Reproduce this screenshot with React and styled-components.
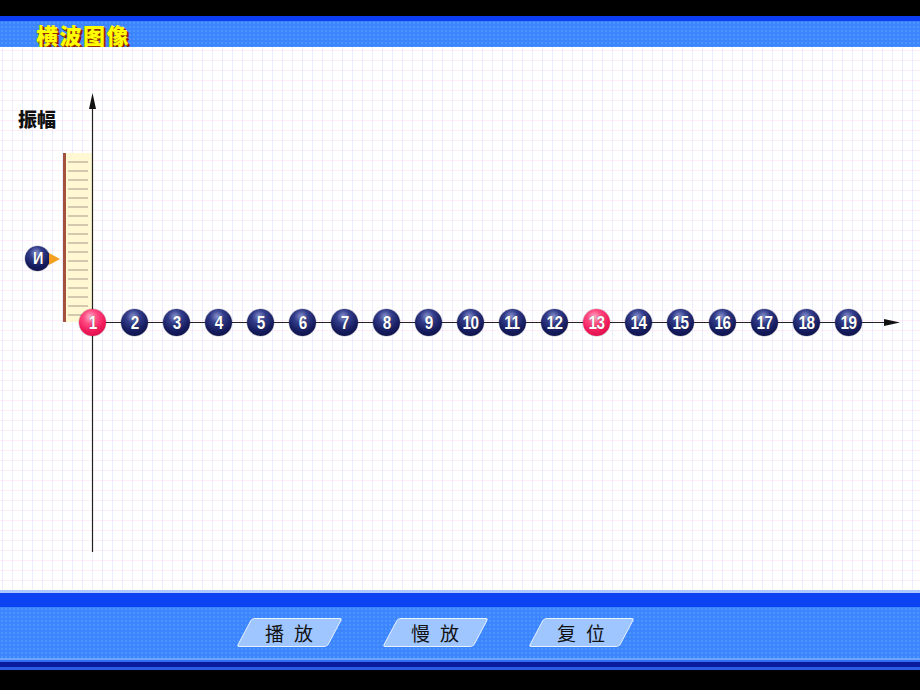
import React from "react";
import styled, { createGlobalStyle } from "styled-components";

const Global = createGlobalStyle`
  html, body { margin: 0; padding: 0; background: #000; }
  body { width: 920px; height: 690px; overflow: hidden; font-family: "Noto Sans CJK SC", "Liberation Sans", sans-serif; }
`;

const Page = styled.div`
  width: 920px;
  height: 690px;
  display: flex;
  flex-direction: column;
  background: #000;
`;

const TopBlack = styled.div`
  height: 16px;
  background: #000;
`;

const Header = styled.header`
  height: 31px;
  display: flex;
  flex-direction: column;
`;

const HeaderStrip = styled.div`
  height: 5px;
  background: #0b3ef2;
`;

const HeaderBar = styled.div`
  flex: 1;
  display: flex;
  align-items: center;
  padding-left: 36px;
  background-color: #3d84ff;
  background-image: radial-gradient(circle, rgba(120, 200, 255, 0.55) 0.6px, transparent 0.8px);
  background-size: 4px 4px;
`;

const Title = styled.h1`
  margin: 0;
  font-family: "Noto Sans CJK SC", sans-serif;
  font-weight: 900;
  font-size: 22px;
  letter-spacing: 1.5px;
  line-height: 1;
  color: #ffff00;
  text-shadow: 1px 1px 0 #9a3000, 2px 2px 0 #7a1a00;
`;

const Stage = styled.main`
  position: relative;
  height: 543px;
  background-color: #ffffff;
  background-image:
    linear-gradient(to right, rgba(160, 175, 255, 0.22) 1px, transparent 1px),
    linear-gradient(to bottom, rgba(255, 170, 230, 0.2) 1px, transparent 1px);
  background-size: 10px 10px;
  background-position: 2px 3px;
  overflow: hidden;
`;

const AxisSvg = styled.svg`
  position: absolute;
  left: 0;
  top: 0;
  width: 920px;
  height: 543px;
`;

const AmpLabel = styled.div`
  position: absolute;
  left: 18px;
  top: 62px;
  font-family: "Noto Sans CJK SC", sans-serif;
  font-weight: 900;
  font-size: 19px;
  line-height: 1;
  color: #111;
`;

const Marker = styled.div`
  position: absolute;
  left: 25px;
  top: 199px;
  display: flex;
  align-items: center;
`;

const Sphere = styled.div`
  width: ${(p) => p.$size}px;
  height: ${(p) => p.$size}px;
  flex: none;
  border-radius: 50%;
  display: flex;
  align-items: center;
  justify-content: center;
  background: ${(p) =>
    p.$hot
      ? "radial-gradient(circle at 42% 30%, #ffb3cc 0%, #ff4a82 28%, #f0195a 60%, #c80c44 100%)"
      : "radial-gradient(circle at 45% 28%, #8a94d0 0%, #323c8a 28%, #161c5e 60%, #0a0d3c 100%)"};
  box-shadow: 0 0 0 0.5px rgba(0, 0, 0, 0.25);
`;

const Num = styled.span`
  display: inline-block;
  color: #fff;
  font-family: "Liberation Sans Narrow", "Liberation Sans", sans-serif;
  font-weight: 700;
  font-size: ${(p) => p.$fs}px;
  letter-spacing: -0.5px;
  line-height: 1;
  transform: scaleX(0.85);
  text-shadow: 0 0 1px rgba(0, 0, 0, 0.6);
`;

const Pointer = styled.div`
  width: 0;
  height: 0;
  margin-left: -1px;
  border-top: 6px solid transparent;
  border-bottom: 6px solid transparent;
  border-left: 11px solid #f3a020;
`;

const BallRow = styled.div`
  position: absolute;
  left: 79px;
  top: 262px;
  display: flex;
  gap: 15px;
`;

const Footer = styled.footer`
  display: flex;
  flex-direction: column;
`;

const Stripe = styled.div`
  height: ${(p) => p.$h}px;
  background: ${(p) => p.$c};
`;

const ButtonBand = styled.div`
  height: 51px;
  display: flex;
  align-items: flex-start;
  padding: 11px 0 0 244px;
  gap: 55px;
  background-color: #3d84ff;
  background-image: radial-gradient(circle, rgba(120, 200, 255, 0.55) 0.6px, transparent 0.8px);
  background-size: 4px 4px;
  box-sizing: border-box;
`;

const SkewButton = styled.button`
  width: 91px;
  height: 29px;
  padding: 0;
  transform: skewX(-28deg);
  background: #9fc6ff;
  border: 1px solid #e8f2ff;
  border-radius: 3px;
  display: flex;
  align-items: center;
  justify-content: center;
  cursor: pointer;
`;

const ButtonLabel = styled.span`
  transform: skewX(28deg);
  font-family: "Noto Sans CJK SC", serif;
  font-weight: 400;
  font-size: 19px;
  letter-spacing: 10px;
  margin-right: -10px;
  color: #111;
`;

const numbers = Array.from({ length: 19 }, (_, i) => i + 1);
const hot = new Set([1, 13]);

const ticks = Array.from({ length: 18 }, (_, i) => 115 + i * 9);

export default function App() {
  return (
    <Page>
      <Global />
      <TopBlack />
      <Header>
        <HeaderStrip />
        <HeaderBar>
          <Title>横波图像</Title>
        </HeaderBar>
      </Header>
      <Stage>
        <AxisSvg viewBox="0 0 920 543">
          <rect x="63" y="106" width="29" height="169" fill="#fff8d2" />
          <rect x="63" y="106" width="3" height="169" fill="#a2523e" />
          {ticks.map((y) => (
            <line key={y} x1="68" x2="88" y1={y} y2={y} stroke="#a89a8a" strokeWidth="1" />
          ))}
          <line x1="92.5" y1="58" x2="92.5" y2="505" stroke="#222" strokeWidth="1.2" />
          <polygon points="92.5,46 89,62 96,62" fill="#111" />
          <line x1="92" y1="275.5" x2="888" y2="275.5" stroke="#222" strokeWidth="1.2" />
          <polygon points="900,275.5 884,272 884,279" fill="#111" />
        </AxisSvg>
        <AmpLabel>振幅</AmpLabel>
        <Marker>
          <Sphere $size={25}>
            <Num $fs={17}>И</Num>
          </Sphere>
          <Pointer />
        </Marker>
        <BallRow>
          {numbers.map((n) => (
            <Sphere key={n} $size={27} $hot={hot.has(n)}>
              <Num $fs={18}>{n}</Num>
            </Sphere>
          ))}
        </BallRow>
      </Stage>
      <Footer>
        <Stripe $h={3} $c="#a9c6ff" />
        <Stripe $h={14} $c="#0b42f2" />
        <ButtonBand>
          <SkewButton>
            <ButtonLabel>播放</ButtonLabel>
          </SkewButton>
          <SkewButton>
            <ButtonLabel>慢放</ButtonLabel>
          </SkewButton>
          <SkewButton>
            <ButtonLabel>复位</ButtonLabel>
          </SkewButton>
        </ButtonBand>
        <Stripe $h={2} $c="#6ea2ff" />
        <Stripe $h={2} $c="#2f6cf0" />
        <Stripe $h={5} $c="#0a1a9c" />
        <Stripe $h={3} $c="#2a5ce8" />
      </Footer>
    </Page>
  );
}
